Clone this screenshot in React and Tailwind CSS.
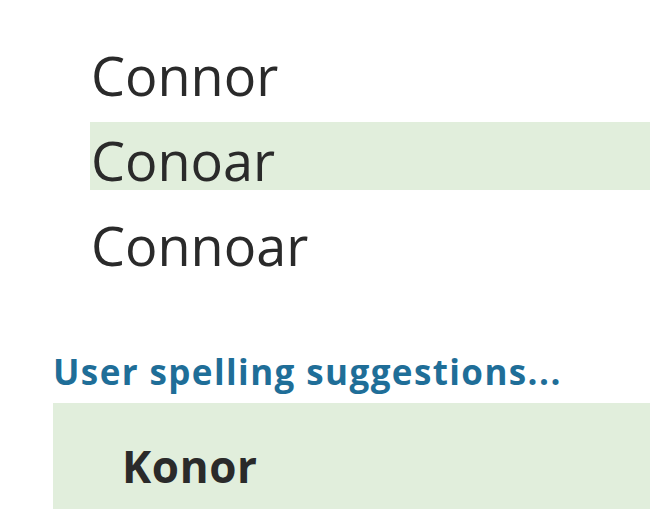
export default function App() {
  const items = ["Connor", "Conoar", "Connoar"];
  return (
    <div className="w-[650px] h-[509px] overflow-hidden bg-white relative" style={{ fontFamily: '"Open Sans", "Noto Sans", sans-serif' }}>
      <div className="pt-[37px] pl-[90px] flex flex-col gap-[17px]">
        {items.map((t, i) => (
          <div
            key={t}
            className={`h-[68px] pt-[7px] flex items-center text-[54px] leading-none text-[#2a2a2a] ${i === 1 ? "bg-[#e1eedc]" : ""}`}
          >
            <span className="ml-[1px]">{t}</span>
          </div>
        ))}
      </div>
      <div className="pl-[53px] mt-[76px] mb-[10px] text-[35px] font-bold leading-[42px] text-[#1f6e98] tracking-[1.4px]">
        User spelling suggestions...
      </div>
      <div className="ml-[53px] h-[106px] bg-[#e1eedc] pl-[69px] pt-[41px] text-[44px] font-bold leading-none text-[#2a2a2a] tracking-[0.6px]">
        Konor
      </div>
    </div>
  );
}
